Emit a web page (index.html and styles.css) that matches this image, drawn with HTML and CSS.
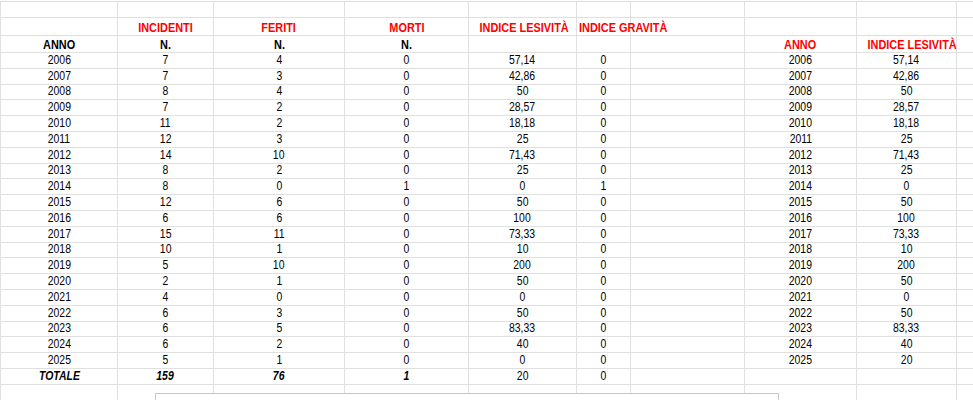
FILE: index.html
```html
<!DOCTYPE html>
<html lang="it">
<head>
<meta charset="utf-8">
<title>Incidenti</title>
<link rel="stylesheet" href="styles.css">
</head>
<body>
<table class="sheet">
  <colgroup>
    <col class="c-a"><col class="c-b"><col class="c-c"><col class="c-d"><col class="c-e"><col class="c-f"><col class="c-g"><col class="c-h"><col class="c-i"><col class="c-j">
  </colgroup>
  <tr class="r-top"><td></td><td></td><td></td><td></td><td></td><td></td><td></td><td></td><td></td><td></td></tr>
  <tr class="r-head1 hd">
    <td></td><td class="red"><span>INCIDENTI</span></td><td class="red"><span>FERITI</span></td><td class="red"><span>MORTI</span></td><td class="red"><span>INDICE LESIVITÀ</span></td><td class="red spill"><span>INDICE GRAVITÀ</span></td><td></td><td></td><td></td><td></td>
  </tr>
  <tr class="r-head2 hd">
    <td><span>ANNO</span></td><td><span>N.</span></td><td><span>N.</span></td><td><span>N.</span></td><td></td><td></td><td></td><td class="red"><span>ANNO</span></td><td class="red"><span>INDICE LESIVITÀ</span></td><td></td>
  </tr>
  <tr class="r-data"><td><span>2006</span></td><td><span>7</span></td><td><span>4</span></td><td><span>0</span></td><td><span>57,14</span></td><td><span>0</span></td><td></td><td><span>2006</span></td><td><span>57,14</span></td><td></td></tr>
  <tr class="r-data"><td><span>2007</span></td><td><span>7</span></td><td><span>3</span></td><td><span>0</span></td><td><span>42,86</span></td><td><span>0</span></td><td></td><td><span>2007</span></td><td><span>42,86</span></td><td></td></tr>
  <tr class="r-data"><td><span>2008</span></td><td><span>8</span></td><td><span>4</span></td><td><span>0</span></td><td><span>50</span></td><td><span>0</span></td><td></td><td><span>2008</span></td><td><span>50</span></td><td></td></tr>
  <tr class="r-data"><td><span>2009</span></td><td><span>7</span></td><td><span>2</span></td><td><span>0</span></td><td><span>28,57</span></td><td><span>0</span></td><td></td><td><span>2009</span></td><td><span>28,57</span></td><td></td></tr>
  <tr class="r-data"><td><span>2010</span></td><td><span>11</span></td><td><span>2</span></td><td><span>0</span></td><td><span>18,18</span></td><td><span>0</span></td><td></td><td><span>2010</span></td><td><span>18,18</span></td><td></td></tr>
  <tr class="r-data"><td><span>2011</span></td><td><span>12</span></td><td><span>3</span></td><td><span>0</span></td><td><span>25</span></td><td><span>0</span></td><td></td><td><span>2011</span></td><td><span>25</span></td><td></td></tr>
  <tr class="r-data"><td><span>2012</span></td><td><span>14</span></td><td><span>10</span></td><td><span>0</span></td><td><span>71,43</span></td><td><span>0</span></td><td></td><td><span>2012</span></td><td><span>71,43</span></td><td></td></tr>
  <tr class="r-data"><td><span>2013</span></td><td><span>8</span></td><td><span>2</span></td><td><span>0</span></td><td><span>25</span></td><td><span>0</span></td><td></td><td><span>2013</span></td><td><span>25</span></td><td></td></tr>
  <tr class="r-data"><td><span>2014</span></td><td><span>8</span></td><td><span>0</span></td><td><span>1</span></td><td><span>0</span></td><td><span>1</span></td><td></td><td><span>2014</span></td><td><span>0</span></td><td></td></tr>
  <tr class="r-data"><td><span>2015</span></td><td><span>12</span></td><td><span>6</span></td><td><span>0</span></td><td><span>50</span></td><td><span>0</span></td><td></td><td><span>2015</span></td><td><span>50</span></td><td></td></tr>
  <tr class="r-data"><td><span>2016</span></td><td><span>6</span></td><td><span>6</span></td><td><span>0</span></td><td><span>100</span></td><td><span>0</span></td><td></td><td><span>2016</span></td><td><span>100</span></td><td></td></tr>
  <tr class="r-data"><td><span>2017</span></td><td><span>15</span></td><td><span>11</span></td><td><span>0</span></td><td><span>73,33</span></td><td><span>0</span></td><td></td><td><span>2017</span></td><td><span>73,33</span></td><td></td></tr>
  <tr class="r-data"><td><span>2018</span></td><td><span>10</span></td><td><span>1</span></td><td><span>0</span></td><td><span>10</span></td><td><span>0</span></td><td></td><td><span>2018</span></td><td><span>10</span></td><td></td></tr>
  <tr class="r-data"><td><span>2019</span></td><td><span>5</span></td><td><span>10</span></td><td><span>0</span></td><td><span>200</span></td><td><span>0</span></td><td></td><td><span>2019</span></td><td><span>200</span></td><td></td></tr>
  <tr class="r-data"><td><span>2020</span></td><td><span>2</span></td><td><span>1</span></td><td><span>0</span></td><td><span>50</span></td><td><span>0</span></td><td></td><td><span>2020</span></td><td><span>50</span></td><td></td></tr>
  <tr class="r-data"><td><span>2021</span></td><td><span>4</span></td><td><span>0</span></td><td><span>0</span></td><td><span>0</span></td><td><span>0</span></td><td></td><td><span>2021</span></td><td><span>0</span></td><td></td></tr>
  <tr class="r-data"><td><span>2022</span></td><td><span>6</span></td><td><span>3</span></td><td><span>0</span></td><td><span>50</span></td><td><span>0</span></td><td></td><td><span>2022</span></td><td><span>50</span></td><td></td></tr>
  <tr class="r-data"><td><span>2023</span></td><td><span>6</span></td><td><span>5</span></td><td><span>0</span></td><td><span>83,33</span></td><td><span>0</span></td><td></td><td><span>2023</span></td><td><span>83,33</span></td><td></td></tr>
  <tr class="r-data"><td><span>2024</span></td><td><span>6</span></td><td><span>2</span></td><td><span>0</span></td><td><span>40</span></td><td><span>0</span></td><td></td><td><span>2024</span></td><td><span>40</span></td><td></td></tr>
  <tr class="r-data"><td><span>2025</span></td><td><span>5</span></td><td><span>1</span></td><td><span>0</span></td><td><span>0</span></td><td><span>0</span></td><td></td><td><span>2025</span></td><td><span>20</span></td><td></td></tr>
  <tr class="r-total"><td class="bi"><span>TOTALE</span></td><td class="bi"><span>159</span></td><td class="bi"><span>76</span></td><td class="bi"><span>1</span></td><td><span>20</span></td><td><span>0</span></td><td></td><td></td><td></td><td></td></tr>
  <tr class="r-last"><td></td><td></td><td></td><td></td><td></td><td></td><td></td><td></td><td></td><td></td></tr>
</table>
<div class="chart-box"></div>
</body>
</html>
```
FILE: styles.css
```css
html, body {
  margin: 0;
  padding: 0;
  background: #ffffff;
}
body {
  position: relative;
  width: 973px;
  height: 400px;
  overflow: hidden;
  font-family: "Liberation Sans", Arial, sans-serif;
  color: #000000;
}
.sheet {
  table-layout: fixed;
  border-collapse: collapse;
  width: 973px;
  margin-top: 1px;
}
.c-a { width: 117px; }
.c-b { width: 96px; }
.c-c { width: 131px; }
.c-d { width: 124px; }
.c-e { width: 108px; }
.c-f { width: 54px; }
.c-g { width: 114px; }
.c-h { width: 112px; }
.c-i { width: 100px; }
.c-j { width: 17px; }
.sheet td {
  border: 1px solid #e0e0e0;
  padding: 0 2px 2px;
  text-align: center;
  vertical-align: bottom;
  white-space: nowrap;
  font-size: 12px;
  line-height: 11px;
  overflow: visible;
}
.sheet td > span {
  display: inline-block;
  transform: scaleX(0.87);
  transform-origin: center bottom;
}
.r-top { height: 16px; }
.r-head1 { height: 18px; }
.r-head2 { height: 17px; }
.r-data { height: 15.8px; }
.r-total { height: 16px; }
.r-last { height: 16px; }
.hd td {
  font-weight: bold;
  font-size: 13px;
}
.hd td > span {
  transform: scaleX(0.84);
}
.red { color: #ff0000; }
.sheet td.spill {
  text-align: left;
}
.sheet td.spill > span {
  transform-origin: left bottom;
}
.bi {
  font-weight: bold;
  font-style: italic;
}
.chart-box {
  position: absolute;
  left: 155px;
  top: 393px;
  width: 624px;
  height: 30px;
  box-sizing: border-box;
  border: 1px solid #c8c8c8;
  background: #ffffff;
}
```
